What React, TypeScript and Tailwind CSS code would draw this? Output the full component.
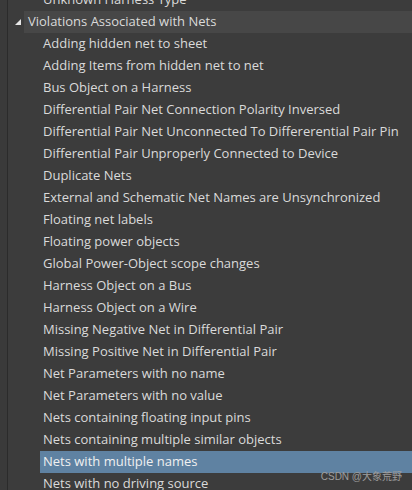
import React from 'react'

const items = [
  'Adding hidden net to sheet',
  'Adding Items from hidden net to net',
  'Bus Object on a Harness',
  'Differential Pair Net Connection Polarity Inversed',
  'Differential Pair Net Unconnected To Differerential Pair Pin',
  'Differential Pair Unproperly Connected to Device',
  'Duplicate Nets',
  'External and Schematic Net Names are Unsynchronized',
  'Floating net labels',
  'Floating power objects',
  'Global Power-Object scope changes',
  'Harness Object on a Bus',
  'Harness Object on a Wire',
  'Missing Negative Net in Differential Pair',
  'Missing Positive Net in Differential Pair',
  'Net Parameters with no name',
  'Net Parameters with no value',
  'Nets containing floating input pins',
  'Nets containing multiple similar objects',
  'Nets with multiple names',
  'Nets with no driving source',
]

const SELECTED = 'Nets with multiple names'

export default function App() {
  return (
    <div
      className="relative flex h-[490px] w-[412px] overflow-hidden bg-[#3c3c3c] text-[13px] text-[#dadada]"
      style={{ fontFamily: '"Open Sans", "Noto Sans", sans-serif' }}
    >
      <div className="w-[8px] shrink-0 border-r border-[#2b2b2b] bg-[#3a3a3a]" />
      <div className="mt-[-11px] flex min-w-0 flex-1 flex-col">
        <div className="flex h-[22px] shrink-0 items-center pl-[35px] whitespace-nowrap">Unknown Harness Type</div>
        <div className="flex h-[22px] shrink-0 items-center">
          <div className="flex w-[16px] shrink-0 items-center justify-center">
            <svg width="6" height="6" viewBox="0 0 6 6" className="ml-[4px]">
              <path d="M6 0 L6 6 L0 6 Z" fill="#e6e6e6" />
            </svg>
          </div>
          <div className="flex h-full flex-1 items-center bg-[#474747] pl-[4px] whitespace-nowrap">
            Violations Associated with Nets
          </div>
        </div>
        {items.map((label) => (
          <div key={label} className="flex h-[22px] shrink-0 items-center pl-[32px]">
            <div
              className={
                label === SELECTED
                  ? 'flex h-full flex-1 items-center bg-[#5f82a2] pl-[3px] whitespace-nowrap text-[#f0f0f0]'
                  : 'flex h-full flex-1 items-center pl-[3px] whitespace-nowrap'
              }
            >
              {label}
            </div>
          </div>
        ))}
      </div>
      <div
        className="absolute bottom-[6px] right-[10px] text-[10px] text-[#9c9c9c]"
        style={{ fontFamily: '"Liberation Sans", "Noto Sans CJK SC", sans-serif' }}
      >
        CSDN @大象荒野
      </div>
    </div>
  )
}
